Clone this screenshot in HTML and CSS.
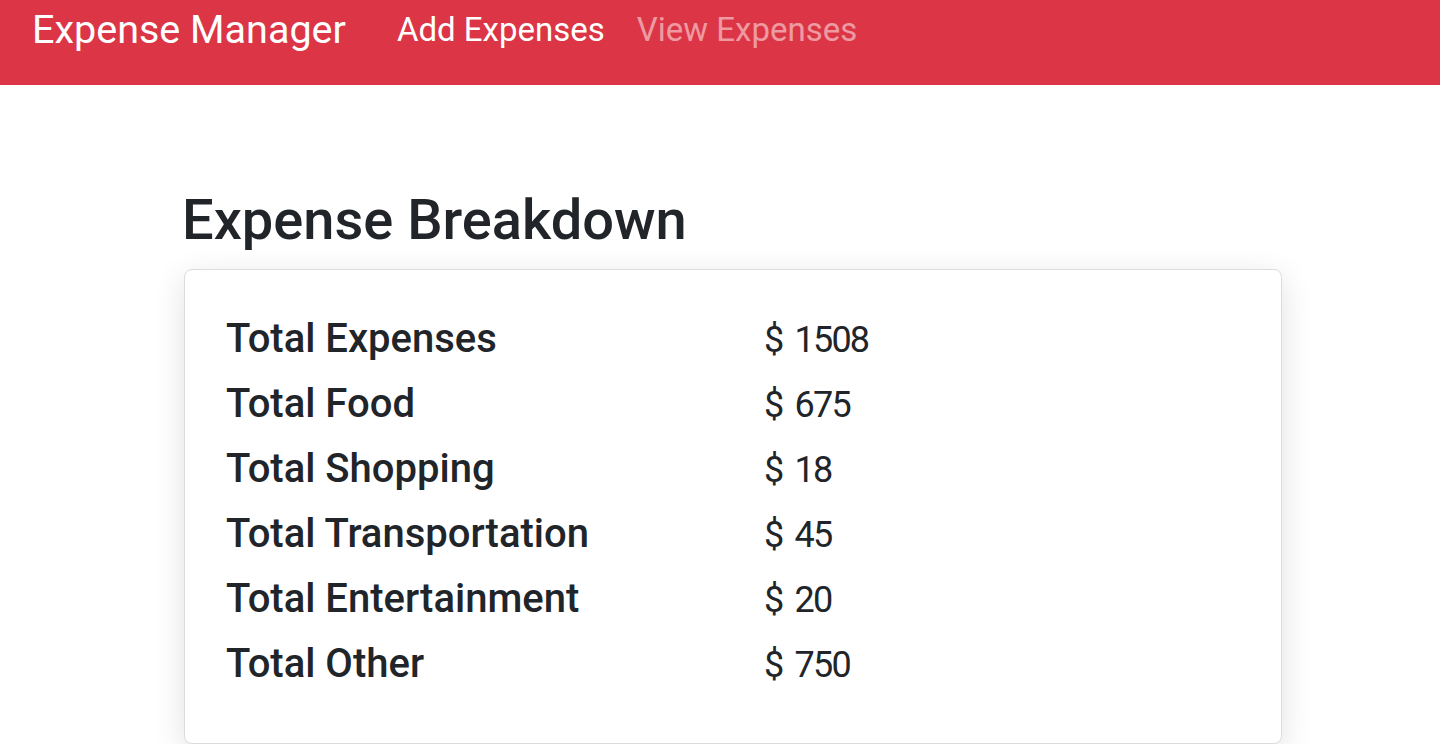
FILE: index.html
```html
<!DOCTYPE html>
<html lang="en">
<head>
<meta charset="utf-8">
<title>Expense Manager</title>
<link rel="stylesheet" href="styles.css">
</head>
<body>
<nav class="navbar">
  <a class="brand" href="#">Expense Manager</a>
  <div class="nav-links">
    <a class="nav-link active" href="#">Add Expenses</a>
    <a class="nav-link muted" href="#">View Expenses</a>
  </div>
</nav>
<main class="main">
  <h1 class="title">Expense Breakdown</h1>
  <section class="card">
    <div class="row"><span class="label">Total Expenses</span><span class="value">$ 1508</span></div>
    <div class="row"><span class="label">Total Food</span><span class="value">$ 675</span></div>
    <div class="row"><span class="label">Total Shopping</span><span class="value">$ 18</span></div>
    <div class="row"><span class="label">Total Transportation</span><span class="value">$ 45</span></div>
    <div class="row"><span class="label">Total Entertainment</span><span class="value">$ 20</span></div>
    <div class="row"><span class="label">Total Other</span><span class="value">$ 750</span></div>
  </section>
</main>
</body>
</html>
```

FILE: styles.css
```css
* { box-sizing: border-box; }
html, body {
  margin: 0;
  padding: 0;
  background: #fff;
  font-family: Roboto, "Liberation Sans", Arial, sans-serif;
  color: #212529;
  overflow: hidden;
}
a { text-decoration: none; }

.navbar {
  background: #dc3545;
  height: 85px;
  display: flex;
  align-items: flex-start;
  padding: 0 0 0 32px;
}
.brand {
  color: #fff;
  font-size: 39.5px;
  line-height: 60px;
  margin-right: 35px;
}
.nav-links {
  display: flex;
  padding-top: 6px;
}
.nav-link {
  font-size: 33px;
  line-height: 48px;
  padding: 0 16px;
}
.nav-link.active { color: #fff; }
.nav-link.muted { color: rgba(255, 255, 255, 0.5); }

.main {
  padding: 102px 0 0 184px;
  width: 1282px;
}
.title {
  font-size: 56px;
  font-weight: 500;
  line-height: 67px;
  margin: 0 0 15px -2px;
}
.card {
  border: 1px solid #dcdcdc;
  border-radius: 8px;
  padding: 36px 40px 47px 41px;
  box-shadow: 0 8px 32px rgba(0, 0, 0, 0.12);
  background: #fff;
}
.row {
  display: grid;
  grid-template-columns: 538px 1fr;
  align-items: baseline;
  height: 65px;
}
.label {
  font-size: 40px;
  font-weight: 500;
  line-height: 65px;
}
.value {
  font-size: 36px;
  line-height: 65px;
  letter-spacing: -1.8px;
  word-spacing: 5px;
}
```
